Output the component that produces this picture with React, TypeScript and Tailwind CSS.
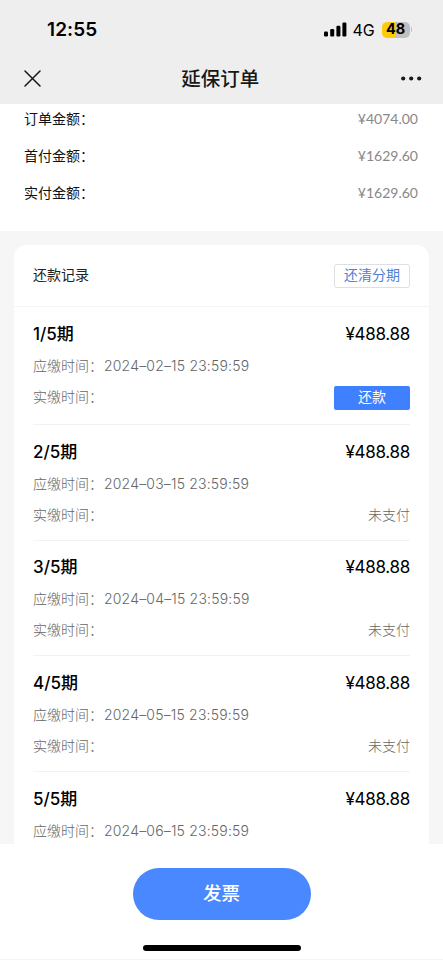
type Period = {
  title: string;
  due: string;
  status?: "payable" | "unpaid";
};

const amounts = [
  { label: "订单金额：", value: "¥4074.00" },
  { label: "首付金额：", value: "¥1629.60" },
  { label: "实付金额：", value: "¥1629.60" },
];

const periods: Period[] = [
  { title: "1/5", due: "2024–02–15 23:59:59", status: "payable" },
  { title: "2/5", due: "2024–03–15 23:59:59", status: "unpaid" },
  { title: "3/5", due: "2024–04–15 23:59:59", status: "unpaid" },
  { title: "4/5", due: "2024–05–15 23:59:59", status: "unpaid" },
  { title: "5/5", due: "2024–06–15 23:59:59" },
];

function StatusBar() {
  return (
    <div className="flex h-[59px] items-center justify-between pl-[47px] pr-[31px] text-black">
      <span className="text-[19px] leading-none font-semibold tracking-[0.1px]">12:55</span>
      <div className="flex items-center">
        <svg width="23" height="15" viewBox="0 0 23 15" fill="currentColor">
          <rect x="0" y="9.5" width="4" height="5" rx="1.2" />
          <rect x="6.2" y="7" width="4" height="7.5" rx="1.2" />
          <rect x="12.4" y="3.8" width="4" height="10.7" rx="1.2" />
          <rect x="18.4" y="0.5" width="4" height="14" rx="1.2" />
        </svg>
        <span className="ml-[6px] w-6 text-[16px] leading-none tracking-[-0.2px]">4G</span>
        <span className="ml-[5px] flex h-4 w-7 items-center justify-center rounded-[5px] bg-linear-to-r from-[#fccc0a] from-50% to-[#bfbfbf] to-50% text-[14.5px] leading-none font-bold">
          48
        </span>
        <span className="ml-px h-[5px] w-[1.5px] rounded-r-full bg-[#bfbfbf]" />
      </div>
    </div>
  );
}

function NavBar() {
  return (
    <div className="flex h-[45px] items-center justify-between pl-[23.5px] pr-[21px] pb-[7px] text-[#181818]">
      <svg width="17" height="17" viewBox="0 0 17 17" stroke="currentColor" strokeWidth="1.5" strokeLinecap="round">
        <path d="M1 1L16 16M16 1L1 16" />
      </svg>
      <h1 className="pt-[3px] pr-px text-[19.5px] leading-none font-medium">延保订单</h1>
      <svg width="21" height="5" viewBox="0 0 21 5" fill="currentColor">
        <circle cx="2.2" cy="2.5" r="2.1" />
        <circle cx="10.2" cy="2.5" r="2.1" />
        <circle cx="18.2" cy="2.5" r="2.1" />
      </svg>
    </div>
  );
}

function PeriodItem({ title, due, status }: Period) {
  return (
    <li className={`mx-[19px] shrink-0 border-b border-[#f2f2f2] ${status === "payable" ? "h-[118px]" : "h-[115.7px]"}`}>
      <div className="flex h-[54px] items-center justify-between text-[17px] leading-none text-black">
        <span className="font-medium">{title}期</span>
        <span className="font-normal tracking-[-0.3px]">¥488.88</span>
      </div>
      <div className="-mt-[11px] flex h-[31px] items-center text-[14px] leading-none font-light text-[#666]">
        <span>应缴时间：</span>
        <span className="ml-px tracking-[0.18px]">{due}</span>
      </div>
      {status && (
        <div className="flex h-[31px] items-center justify-between text-[14px] leading-none font-light text-[#666]">
          <span>实缴时间：</span>
          {status === "payable" ? (
            <button className="mt-[3px] h-6 w-[76px] rounded-[2px] bg-[#3f80ff] pb-[3px] font-normal text-white">还款</button>
          ) : (
            <span>未支付</span>
          )}
        </div>
      )}
    </li>
  );
}

function App() {
  return (
    <div className="flex h-[960px] w-[443px] flex-col overflow-hidden bg-[#f6f6f6] font-['Inter','Noto_Sans_CJK_SC',sans-serif]">
      <header className="h-[104px] shrink-0 bg-[#eee]">
        <StatusBar />
        <NavBar />
      </header>

      <main className="flex h-[740px] shrink-0 flex-col overflow-hidden">
        <section className="h-[127px] shrink-0 bg-white pl-6 pr-[25px]">
          {amounts.map((a) => (
            <div key={a.label} className="flex h-[37px] items-center justify-between text-[14px] leading-none first:-mt-[3.5px]">
              <span className="text-[#111]">{a.label}</span>
              <span className="pb-px font-['Lato','Noto_Sans_CJK_SC',sans-serif] text-[#888]">{a.value}</span>
            </div>
          ))}
        </section>

        <section className="mx-[14px] mt-[14px] shrink-0 rounded-t-[12px] bg-white">
          <div className="flex h-[62px] items-center justify-between border-b border-[#f4f4f4] px-[19px]">
            <h2 className="pb-px text-[14px] leading-none text-[#222]">还款记录</h2>
            <button className="h-6 w-[76px] rounded-[3px] border border-[#dcdfe6] pb-px text-[14px] leading-none text-[#4d80d8]">
              还清分期
            </button>
          </div>
          <ul>
            {periods.map((p) => (
              <PeriodItem key={p.title} {...p} />
            ))}
          </ul>
        </section>
      </main>

      <footer className="flex h-[116px] shrink-0 flex-col items-center border-b border-[#f4f4f4] bg-white pt-6">
        <button className="h-[52px] w-[178px] rounded-full bg-[#4988ff] pb-px text-[18.5px] leading-none font-medium text-white">
          发票
        </button>
        <div className="mt-[25px] h-[6px] w-[158px] rounded-full bg-black" />
      </footer>
    </div>
  );
}

export default App;
